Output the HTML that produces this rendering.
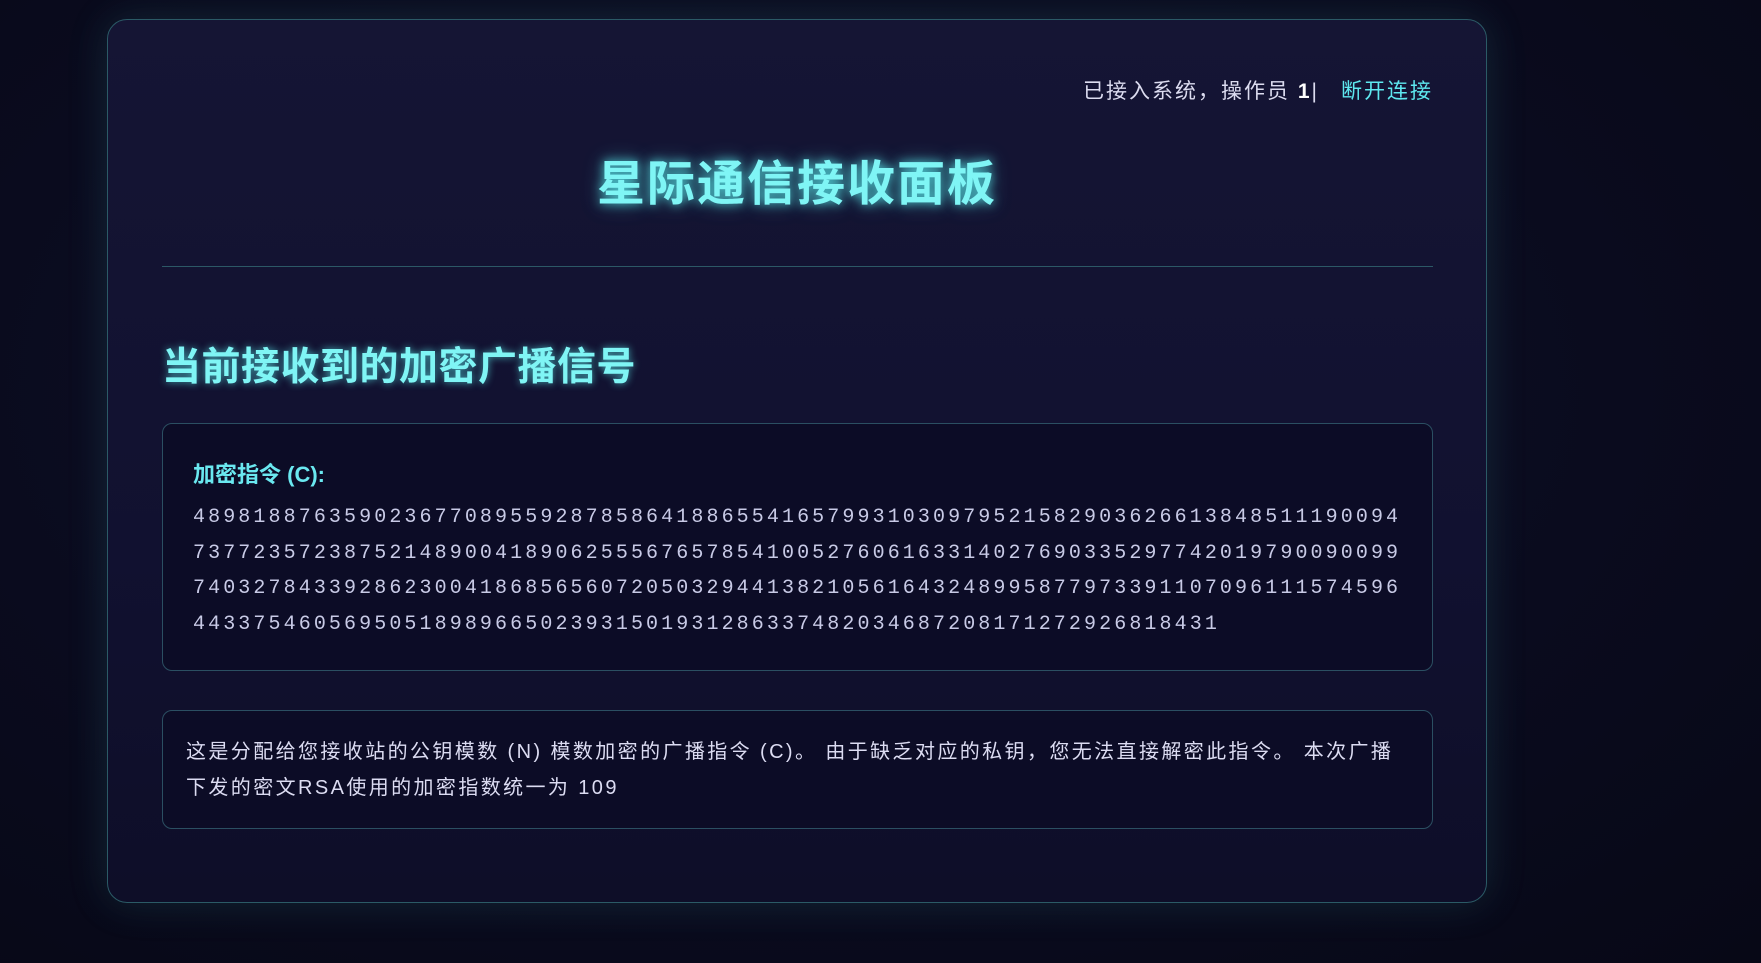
<!DOCTYPE html>
<html><head><meta charset="utf-8"><style>
html,body{margin:0;padding:0;width:1761px;height:963px;overflow:hidden;background:#090a1c;font-family:"Liberation Sans","Noto Sans CJK SC",sans-serif;}
body{background:radial-gradient(ellipse at 45% 40%,#10122a 0%,#0a0b1e 60%,#070816 100%);}
.card{position:absolute;left:107px;top:19px;width:1380px;height:884px;box-sizing:border-box;border:1px solid #2b5a66;border-radius:20px;background:linear-gradient(180deg,#151534 0%,#111130 60%,#0e0e28 100%);box-shadow:0 0 40px rgba(60,160,170,0.18);}
.hdr{position:absolute;right:53px;top:55px;font-size:21px;color:#dcdcf0;letter-spacing:2px;}
.hdr b{color:#fff}
.hdr a{color:#5ee8f0;text-decoration:none;margin-left:22px}
h1{position:absolute;left:0;right:0;top:124px;margin:0;text-align:center;font-size:48px;font-weight:bold;color:#7ff5f5;letter-spacing:2px;text-shadow:0 0 10px rgba(90,240,240,0.8),0 0 20px rgba(90,240,240,0.4);}
.hr{position:absolute;left:54px;right:53px;top:246px;height:1px;background:#2c5866;}
h2{position:absolute;left:54px;top:316px;margin:0;font-size:39px;font-weight:bold;color:#7ff5f5;letter-spacing:0.5px;text-shadow:0 0 8px rgba(90,240,240,0.7);}
.box{position:absolute;left:54px;right:53px;box-sizing:border-box;border:1px solid #2b4f62;border-radius:10px;background:#0c0c26;}
.b1{top:403px;height:248px;}
.b2{top:690px;height:119px;}
.lbl{position:absolute;left:30px;top:33px;font-size:22px;font-weight:bold;color:#6ae8f0;}
.num{position:absolute;left:30px;top:76px;font-family:"Liberation Mono",monospace;font-size:20px;letter-spacing:3.1px;line-height:35.5px;color:#c8cae6;}
.txt{position:absolute;left:23px;right:20px;top:23px;font-size:20px;line-height:36px;color:#dcdcf2;white-space:nowrap;letter-spacing:2.4px;}
</style></head><body>
<div class="card">
<div class="hdr">已接入系统，操作员 <b>1</b>|<a>断开连接</a></div>
<h1>星际通信接收面板</h1>
<div class="hr"></div>
<h2>当前接收到的加密广播信号</h2>
<div class="box b1">
<div class="lbl">加密指令 (C):</div>
<div class="num">48981887635902367708955928785864188655416579931030979521582903626613848511190094<br>73772357238752148900418906255567657854100527606163314027690335297742019790090099<br>74032784339286230041868565607205032944138210561643248995877973391107096111574596<br>44337546056950518989665023931501931286337482034687208171272926818431</div>
</div>
<div class="box b2">
<div class="txt">这是分配给您接收站的公钥模数 (N) 模数加密的广播指令 (C)。 由于缺乏对应的私钥，您无法直接解密此指令。 本次广播<br>下发的密文RSA使用的加密指数统一为 109</div>
</div>
</div>
</body></html>
